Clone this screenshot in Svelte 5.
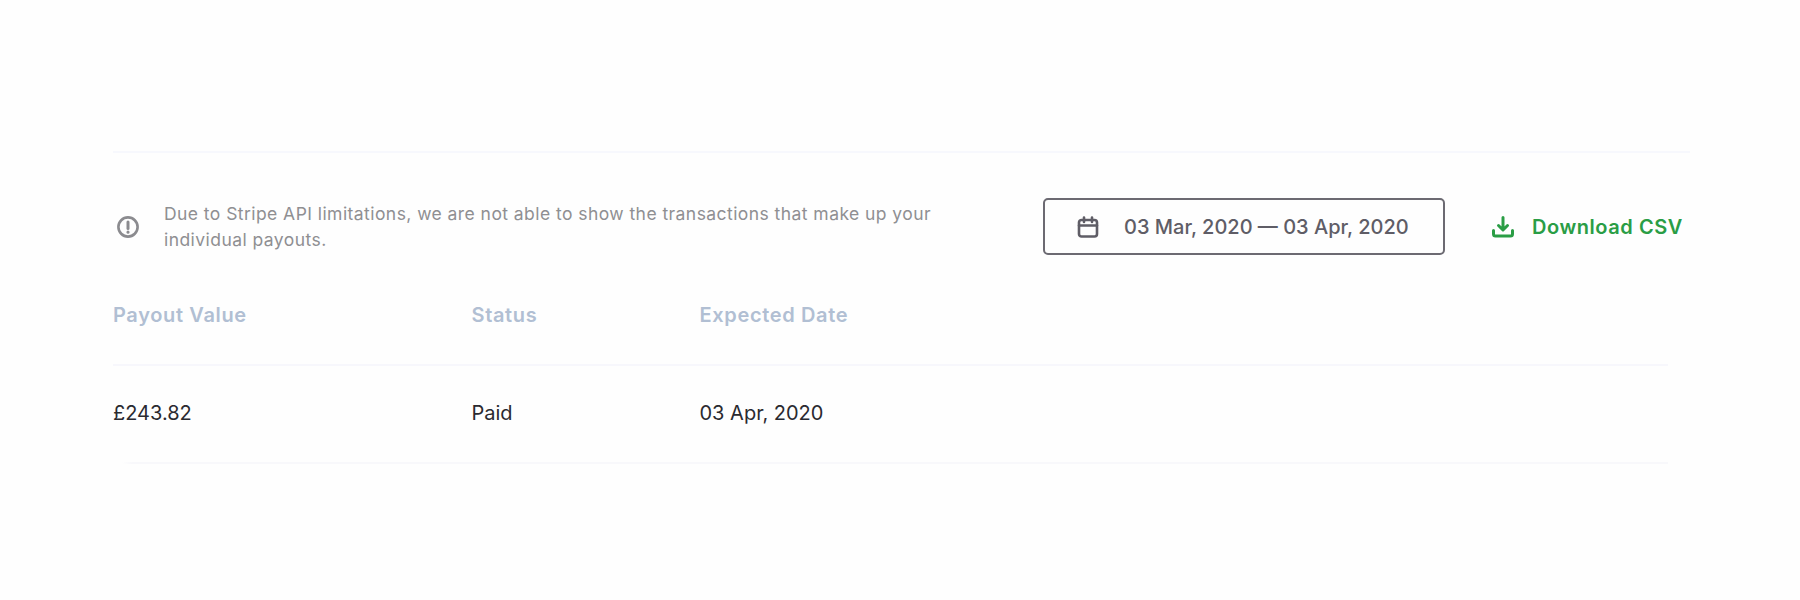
<script>
  const columns = ['Payout Value', 'Status', 'Expected Date'];
  const rows = [{ value: '£243.82', status: 'Paid', date: '03 Apr, 2020' }];
</script>

<main class="page">
  <div class="rule"></div>
  <section class="toolbar">
    <div class="notice">
      <svg class="notice-icon" viewBox="0 0 24 24" width="24" height="24" fill="none" stroke="#8b8b8f" stroke-width="2.6">
        <circle cx="12" cy="12" r="9.6" />
        <path d="M12 7v6.4" stroke-linecap="round" stroke-width="3" />
        <path d="M12 17v.2" stroke-linecap="round" stroke-width="3" />
      </svg>
      <p>Due to Stripe API limitations, we are not able to show the transactions that make up your individual payouts.</p>
    </div>
    <button class="range">
      <svg viewBox="0 0 24 24" width="24" height="24" fill="none" stroke="#5f5d66" stroke-width="2.6" stroke-linecap="round" stroke-linejoin="round">
        <rect x="3" y="5" width="18" height="16.5" rx="2.5" />
        <path d="M3 10.5h18M8 2.5v4.5M16 2.5v4.5" />
      </svg>
      <span>03 Mar, 2020 — 03 Apr, 2020</span>
    </button>
    <a class="download" href="#csv">
      <svg viewBox="0 0 24 24" width="24" height="24" fill="none" stroke="#2a9d45" stroke-width="3" stroke-linecap="round" stroke-linejoin="round">
        <path d="M12 2.5v12M7.5 10.5l4.5 4.5 4.5-4.5" />
        <path d="M2.5 15.5v3.5a2 2 0 0 0 2 2h15a2 2 0 0 0 2-2v-3.5" />
      </svg>
      <span>Download CSV</span>
    </a>
  </section>

  <div class="table">
    <div class="row head">
      {#each columns as column}
        <div>{column}</div>
      {/each}
    </div>
    {#each rows as row}
      <div class="row body">
        <div>{row.value}</div>
        <div>{row.status}</div>
        <div>{row.date}</div>
      </div>
    {/each}
  </div>
</main>

<style>
  :global(body) {
    margin: 0;
    background: #fefefe;
    font-family: "Inter", "Liberation Sans", sans-serif;
  }
  .page {
    width: 1577px;
    height: 600px;
    box-sizing: border-box;
    margin-left: 113px;
    padding-top: 151px;
  }
  .rule {
    height: 2px;
    background: #f7f8fd;
  }
  .toolbar {
    display: flex;
    align-items: center;
    margin-top: 45px;
    height: 57px;
  }
  .notice {
    display: flex;
    align-items: center;
    width: 930px;
  }
  .notice-icon {
    flex: none;
    margin-left: 3px;
    margin-right: 24px;
  }
  .notice p {
    margin: 0;
    width: 785px;
    font-size: 17.5px;
    line-height: 26px;
    color: #8f8f92;
    letter-spacing: 0.44px;
  }
  .range {
    display: flex;
    align-items: center;
    gap: 24px;
    box-sizing: border-box;
    width: 402px;
    height: 57px;
    padding: 0 0 0 31px;
    background: #fefefe;
    border: 2px solid #6c6a72;
    border-radius: 5px;
    font: inherit;
    font-size: 20px;
    font-weight: 500;
    color: #5f5d66;
  }
  .download {
    display: flex;
    align-items: center;
    gap: 17px;
    margin-left: 46px;
    font-size: 20px;
    font-weight: 600;
    letter-spacing: 0.55px;
    color: #2a9d45;
    text-decoration: none;
  }
  .table {
    width: 1555px;
  }
  .row {
    display: grid;
    grid-template-columns: 358.5px 228px 1fr;
    align-items: center;
    font-size: 20px;
  }
  .head {
    height: 111px;
    padding-top: 10px;
    box-sizing: border-box;
    border-bottom: 2px solid #f7f7fc;
    color: #b1bfd3;
    font-weight: 600;
    letter-spacing: 0.65px;
  }
  .body {
    height: 98px;
    padding-bottom: 2px;
    box-sizing: border-box;
    border-bottom: 2px solid;
    border-image: linear-gradient(to right, transparent 10px, #f8f8fb 20px) 1;
    color: #2a2a30;
  }
</style>
